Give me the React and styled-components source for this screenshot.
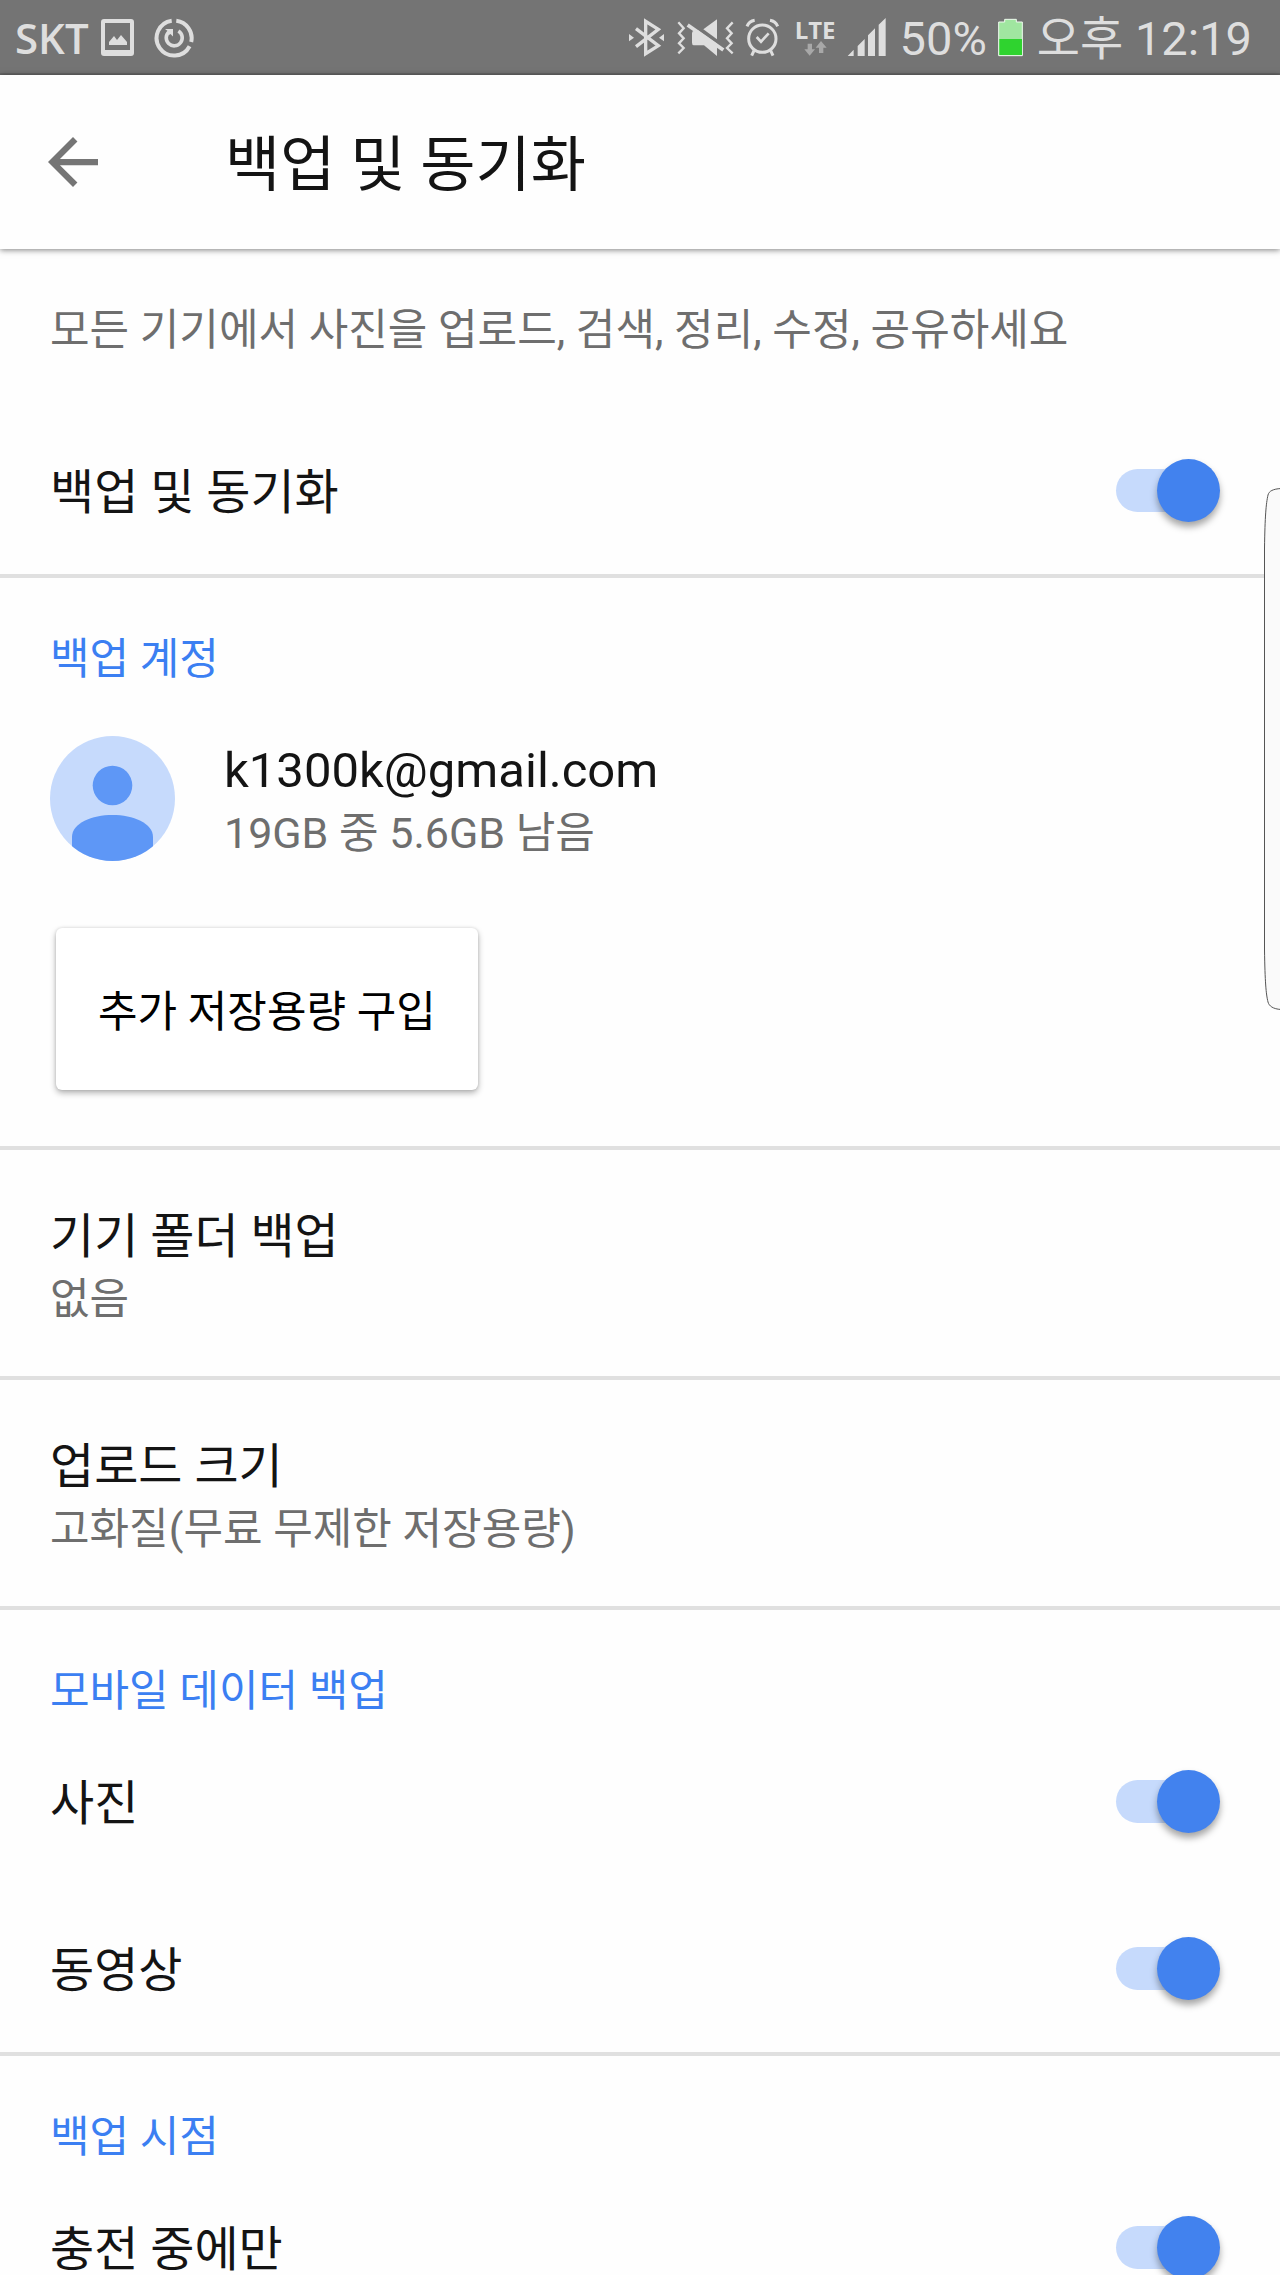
import React, { useState } from "react";
import styled, { createGlobalStyle } from "styled-components";

const GlobalStyle = createGlobalStyle`
  * {
    box-sizing: border-box;
  }

  body {
    margin: 0;
    background-color: #fefefe;
    font-family: Roboto, "Noto Sans CJK KR", sans-serif;
    color: #141414;
  }
`;

const Page = styled.div`
  position: relative;
  overflow: hidden;
`;

const StatusBar = styled.div`
  display: flex;
  justify-content: space-between;
  align-items: center;
  height: 75px;
  padding: 2px 28px 0 15px;
  background-color: #747474;
  border-bottom: 2px solid #666666;
  color: #dedede;
`;

const StatusGroup = styled.div`
  display: flex;
  align-items: center;
  gap: ${({ $gap }) => $gap}px;
`;

const Carrier = styled.span`
  font-family: "Open Sans", sans-serif;
  font-size: 42px;
  font-weight: 600;
  line-height: 48px;
`;

const StatusText = styled.span`
  padding: 2px 0 0 3px;
  font-size: 47px;
  line-height: 56px;
  white-space: nowrap;
`;

const Network = styled.span`
  display: flex;
  flex-direction: column;
  align-items: center;
  padding: 0 0 0 4px;
  font-family: "Open Sans", sans-serif;
  font-size: 24px;
  font-weight: 700;
  line-height: 22px;
`;

const AppBar = styled.header`
  display: flex;
  align-items: center;
  height: 174px;
  padding: 0 48px;
  background-color: #fefefe;
  box-shadow: 0 1px 6px rgba(0, 0, 0, 0.5);
`;

const BackButton = styled.button`
  display: flex;
  width: 177px;
  padding: 0;
  border: none;
  background: none;
  color: #757575;
  cursor: pointer;
`;

const PageTitle = styled.h1`
  margin: 0;
  padding-top: 8px;
  font-size: 60px;
  font-weight: 400;
  line-height: 72px;
`;

const Description = styled.p`
  margin: 0;
  padding: 53px 50px 49px;
  font-size: 43px;
  line-height: 56px;
  color: #6e6e6e;
`;

const Section = styled.section`
  border-bottom: 4px solid #e0e0e0;
`;

const SectionTitle = styled.h2`
  margin: 0;
  padding: 55px 50px 1px;
  font-size: 43px;
  font-weight: 400;
  line-height: 52px;
  color: #3b7ff2;
`;

const SwitchRow = styled.label`
  display: flex;
  justify-content: space-between;
  align-items: center;
  height: 167px;
  padding: 0 60px 0 50px;
  cursor: pointer;
`;

const ItemTitle = styled.span`
  display: block;
  padding-top: 5px;
  font-size: ${({ $email }) => ($email ? 49 : 48)}px;
  line-height: 64px;
`;

const ItemSummary = styled.span`
  display: block;
  font-size: 43px;
  line-height: 60px;
  color: #6e6e6e;
`;

const Switch = styled.input`
  appearance: none;
  display: grid;
  align-items: center;
  width: 104px;
  height: 63px;
  margin: 0;
  cursor: pointer;

  &::before,
  &::after {
    content: "";
    grid-area: 1 / 1;
  }

  &::before {
    width: 90px;
    height: 43px;
    border-radius: 22px;
    background-color: #c6dafc;
  }

  &::after {
    justify-self: end;
    width: 63px;
    height: 63px;
    border-radius: 50%;
    background-color: #4282ee;
    box-shadow: 0 5px 7px rgba(0, 0, 0, 0.35);
  }

  &:not(:checked)::before {
    background-color: #c4c4c4;
  }

  &:not(:checked)::after {
    justify-self: start;
    background-color: #f1f1f1;
  }
`;

const ItemButton = styled.button`
  display: block;
  width: 100%;
  padding: 50px 50px 47px;
  border: none;
  background: none;
  color: inherit;
  font-family: inherit;
  text-align: left;
  cursor: pointer;
`;

const Account = styled.div`
  display: flex;
  align-items: center;
  gap: 49px;
  padding: 48px 50px 65px;
`;

const BuyButton = styled.button`
  display: block;
  margin: 0 56px 56px;
  padding: 56px 42px 50px;
  border: none;
  border-radius: 6px;
  background-color: #ffffff;
  box-shadow: 0 3px 6px rgba(0, 0, 0, 0.3), 0 0 3px rgba(0, 0, 0, 0.12);
  color: #000000;
  font-family: inherit;
  font-size: 43px;
  line-height: 56px;
  cursor: pointer;
`;

const EdgeHandle = styled.svg`
  position: absolute;
  top: 488px;
  right: 0;
`;

function ScreenshotIcon() {
  return (
    <svg width="33" height="37" viewBox="0 0 33 37" fill="currentColor">
      <path
        fillRule="evenodd"
        d="M3 0H30Q33 0 33 3V34Q33 37 30 37H3Q0 37 0 34V3Q0 0 3 0ZM4 4V31H29V4Z"
      />
      <path d="M8 26V23L13 17L16 21L20 16L26 23V26Z" />
    </svg>
  );
}

function SyncIcon() {
  return (
    <svg width="48" height="40" viewBox="-8 0 48 40" fill="none" stroke="currentColor">
      <path strokeWidth="4" d="M22.3 2.7A17.5 17.5 0 0 1 37.2 24" />
      <path strokeWidth="4" d="M35.6 28.2A17.5 17.5 0 1 1 17.7 2.7" />
      <path strokeWidth="3.6" d="M24.4 13A8 8 0 1 1 15.2 13.6" />
      <path fill="currentColor" stroke="none" d="M11 11H19V18.5L16.5 16L14 17.5L15 14Z" />
    </svg>
  );
}

function BluetoothIcon() {
  return (
    <svg width="37" height="39" viewBox="0 0 111 117" fill="none" stroke="currentColor">
      <path strokeWidth="10" d="M24 32L91 83L53 107V10L91 34L24 86" />
      <path fill="currentColor" stroke="none" d="M3 48V70L18 59ZM108 48V70L93 59Z" />
    </svg>
  );
}

function VibrateIcon() {
  return (
    <svg width="58" height="39" viewBox="0 0 174 117" fill="currentColor">
      <g fill="none" stroke="currentColor">
        <path strokeWidth="7" d="M7 13L23 31L9 46L23 61L9 76L23 90L7 106" />
        <path strokeWidth="7" d="M170 13L153 31L167 46L153 61L167 76L153 90L170 106" />
        <path strokeWidth="11" d="M35 21L142 96" />
      </g>
      <path d="M123 4V64L82 34Z" />
      <path d="M54 38L66 37L123 77V114L84 82H54Q48 82 48 74V46Q48 39 54 38Z" />
    </svg>
  );
}

function AlarmIcon() {
  return (
    <svg width="35" height="39" viewBox="0 0 105 117" fill="none" stroke="currentColor">
      <circle cx="52" cy="62" r="41" strokeWidth="9" />
      <path strokeWidth="8" d="M35 57L48 71L71 46" />
      <path strokeWidth="9" d="M27 98L20 113M77 98L84 113" />
      <path strokeWidth="9" d="M6 25Q12 10 29 7M98 25Q92 10 75 7" />
    </svg>
  );
}

function DataArrows() {
  return (
    <svg width="23" height="15" viewBox="0 0 69 45" fill="#a8a8a8">
      <path d="M11 8H24V25H33L17 44L1 25H11Z" />
      <path d="M45 36H58V20H68L51 0L35 20H45Z" />
    </svg>
  );
}

function SignalIcon() {
  return (
    <svg width="39" height="39" viewBox="0 0 117 117" fill="currentColor">
      <path d="M2 114H20V95ZM32 84L53 63V114H32ZM63 52L84 31V114H63ZM95 20L116 0V114H95Z" />
    </svg>
  );
}

function BatteryIcon() {
  return (
    <svg width="25" height="39" viewBox="0 0 75 117">
      <path
        fill="#a0e6a0"
        stroke="#effbef"
        strokeWidth="3"
        d="M2 12H20V4H55V12H73V113H2Z"
      />
      <path fill="#2fd32f" d="M4 63H72V111H4Z" />
    </svg>
  );
}

function BackIcon() {
  return (
    <svg width="50" height="50" viewBox="4 4 16 16" fill="currentColor">
      <path d="M20 11H7.83l5.59-5.59L12 4l-8 8 8 8 1.41-1.41L7.83 13H20v-2z" />
    </svg>
  );
}

function Avatar() {
  return (
    <svg width="125" height="125" viewBox="0 0 125 125">
      <clipPath id="avatar">
        <circle cx="62.5" cy="62.5" r="62.5" />
      </clipPath>
      <g clipPath="url(#avatar)">
        <rect width="125" height="125" fill="#c6dafc" />
        <circle cx="62.5" cy="49.5" r="19.8" fill="#5e97f6" />
        <path fill="#5e97f6" d="M22 125V101C22 87 42 79 62.5 79S103 87 103 101V125Z" />
      </g>
    </svg>
  );
}

function SwitchItem({ title }) {
  const [checked, setChecked] = useState(true);

  return (
    <SwitchRow>
      <ItemTitle>{title}</ItemTitle>
      <Switch
        type="checkbox"
        role="switch"
        checked={checked}
        onChange={() => setChecked(!checked)}
      />
    </SwitchRow>
  );
}

export default function App() {
  return (
    <Page>
      <GlobalStyle />
      <StatusBar>
        <StatusGroup $gap={12}>
          <Carrier>SKT</Carrier>
          <ScreenshotIcon />
          <SyncIcon />
        </StatusGroup>
        <StatusGroup $gap={11}>
          <BluetoothIcon />
          <VibrateIcon />
          <AlarmIcon />
          <Network>
            LTE
            <DataArrows />
          </Network>
          <SignalIcon />
          <StatusText>50%</StatusText>
          <BatteryIcon />
          <StatusText>오후 12:19</StatusText>
        </StatusGroup>
      </StatusBar>
      <AppBar>
        <BackButton aria-label="뒤로">
          <BackIcon />
        </BackButton>
        <PageTitle>백업 및 동기화</PageTitle>
      </AppBar>
      <main>
        <Section>
          <Description>모든 기기에서 사진을 업로드, 검색, 정리, 수정, 공유하세요</Description>
          <SwitchItem title="백업 및 동기화" />
        </Section>
        <Section>
          <SectionTitle>백업 계정</SectionTitle>
          <Account>
            <Avatar />
            <div>
              <ItemTitle $email>k1300k@gmail.com</ItemTitle>
              <ItemSummary>19GB 중 5.6GB 남음</ItemSummary>
            </div>
          </Account>
          <BuyButton>추가 저장용량 구입</BuyButton>
        </Section>
        <Section>
          <ItemButton>
            <ItemTitle>기기 폴더 백업</ItemTitle>
            <ItemSummary>없음</ItemSummary>
          </ItemButton>
        </Section>
        <Section>
          <ItemButton>
            <ItemTitle>업로드 크기</ItemTitle>
            <ItemSummary>고화질(무료 무제한 저장용량)</ItemSummary>
          </ItemButton>
        </Section>
        <Section>
          <SectionTitle>모바일 데이터 백업</SectionTitle>
          <SwitchItem title="사진" />
          <SwitchItem title="동영상" />
        </Section>
        <Section>
          <SectionTitle>백업 시점</SectionTitle>
          <SwitchItem title="충전 중에만" />
        </Section>
      </main>
      <EdgeHandle width="16" height="522" viewBox="0 0 16 522">
        <path
          fill="#fafafa"
          stroke="#555555"
          d="M17 0.5C9 1 5 3 4 7C2 16 1 28 0.5 60V462C1 494 2 506 4 514C5 518 9 521 17 521.5"
        />
      </EdgeHandle>
    </Page>
  );
}
